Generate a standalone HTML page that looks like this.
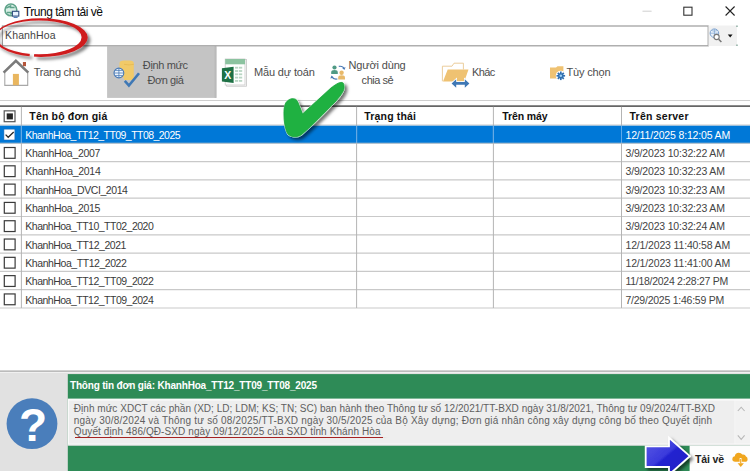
<!DOCTYPE html>
<html lang="vi">
<head>
<meta charset="utf-8">
<title>Trung tâm tải về</title>
<style>
html,body{margin:0;padding:0;}
body{width:750px;height:471px;overflow:hidden;background:#fff;position:relative;
  font-family:"Liberation Sans","DejaVu Sans",sans-serif;color:#222;}
.abs{position:absolute;}
svg{position:absolute;overflow:visible;}
.t{position:absolute;white-space:nowrap;line-height:1;}
</style>
</head>
<body>
<svg width="750" height="471" viewBox="0 0 750 471" style="left:0;top:0;">
<!-- backgrounds -->
<rect x="107.1" y="46.3" width="109.3" height="51.6" fill="#c4c4c4"/>
<rect x="214.6" y="46.3" width="1.8" height="51.6" fill="#bababa"/>
<rect x="0" y="125.45" width="750" height="18.11" fill="#0078d7"/>
<rect x="0" y="372.5" width="750" height="98.5" fill="#e1e1e1"/>
<rect x="67.8" y="374.1" width="682.2" height="97" fill="#2e8b57"/>
<rect x="67.8" y="398.6" width="682.2" height="46.8" fill="#fafafa"/>
<rect x="69" y="400.6" width="665.6" height="43" fill="#eeeeee"/>
<rect x="735.2" y="400.6" width="14.8" height="43" fill="#f2f2f2"/>
<rect x="67.8" y="444.6" width="682.2" height="1" fill="#dedede"/>
<rect x="689.6" y="445.6" width="60.4" height="25.4" fill="#fdfdfd"/>
</svg>
<svg width="750" height="471" viewBox="0 0 750 471" style="left:0;top:0;">
<!-- search box -->
<rect x="2.4" y="26" width="705.8" height="19.8" fill="#fff" stroke="#9c9c9c" stroke-width="1.2"/>
<!-- table lines -->
<line x1="0" y1="100.5" x2="750" y2="100.5" stroke="#cfcfcf" stroke-width="1"/>
<line x1="0" y1="106.2" x2="750" y2="106.2" stroke="#666" stroke-width="1.7"/>
<line x1="0" y1="124.95" x2="750" y2="124.95" stroke="#cfcfcf" stroke-width="1"/>
<line x1="0" y1="143.25" x2="750" y2="143.25" stroke="#c9c9c9" stroke-width="1.2"/>
<line x1="0" y1="161.56" x2="750" y2="161.56" stroke="#c9c9c9" stroke-width="1.2"/>
<line x1="0" y1="179.87" x2="750" y2="179.87" stroke="#c9c9c9" stroke-width="1.2"/>
<line x1="0" y1="198.17" x2="750" y2="198.17" stroke="#c9c9c9" stroke-width="1.2"/>
<line x1="0" y1="216.48" x2="750" y2="216.48" stroke="#c9c9c9" stroke-width="1.2"/>
<line x1="0" y1="234.78" x2="750" y2="234.78" stroke="#c9c9c9" stroke-width="1.2"/>
<line x1="0" y1="253.08" x2="750" y2="253.08" stroke="#c9c9c9" stroke-width="1.2"/>
<line x1="0" y1="271.39" x2="750" y2="271.39" stroke="#c9c9c9" stroke-width="1.2"/>
<line x1="0" y1="289.69" x2="750" y2="289.69" stroke="#c9c9c9" stroke-width="1.2"/>
<line x1="0" y1="308.00" x2="750" y2="308.00" stroke="#c9c9c9" stroke-width="1.2"/>
<line x1="21.4" y1="106.8" x2="21.4" y2="308.00" stroke="#b4b4b4" stroke-width="1"/>
<line x1="21.4" y1="125.55" x2="21.4" y2="142.85" stroke="#5ea9ea" stroke-width="1"/>
<line x1="356.6" y1="106.8" x2="356.6" y2="308.00" stroke="#b4b4b4" stroke-width="1"/>
<line x1="356.6" y1="125.55" x2="356.6" y2="142.85" stroke="#5ea9ea" stroke-width="1"/>
<line x1="493.4" y1="106.8" x2="493.4" y2="308.00" stroke="#b4b4b4" stroke-width="1"/>
<line x1="493.4" y1="125.55" x2="493.4" y2="142.85" stroke="#5ea9ea" stroke-width="1"/>
<line x1="621.5" y1="106.8" x2="621.5" y2="308.00" stroke="#b4b4b4" stroke-width="1"/>
<line x1="621.5" y1="125.55" x2="621.5" y2="142.85" stroke="#5ea9ea" stroke-width="1"/>
<line x1="0" y1="371.2" x2="750" y2="371.2" stroke="#a5a5a5" stroke-width="1.2"/>
<!-- row checkboxes -->
<rect x="3.9" y="129.10" width="11" height="10.9" fill="#fff" stroke="#1566b8" stroke-width="0.6"/>
<rect x="4.3" y="147.50" width="10.8" height="10.8" fill="#fff" stroke="#3a3a3a" stroke-width="1.2"/>
<rect x="4.3" y="165.81" width="10.8" height="10.8" fill="#fff" stroke="#3a3a3a" stroke-width="1.2"/>
<rect x="4.3" y="184.12" width="10.8" height="10.8" fill="#fff" stroke="#3a3a3a" stroke-width="1.2"/>
<rect x="4.3" y="202.42" width="10.8" height="10.8" fill="#fff" stroke="#3a3a3a" stroke-width="1.2"/>
<rect x="4.3" y="220.73" width="10.8" height="10.8" fill="#fff" stroke="#3a3a3a" stroke-width="1.2"/>
<rect x="4.3" y="239.03" width="10.8" height="10.8" fill="#fff" stroke="#3a3a3a" stroke-width="1.2"/>
<rect x="4.3" y="257.33" width="10.8" height="10.8" fill="#fff" stroke="#3a3a3a" stroke-width="1.2"/>
<rect x="4.3" y="275.64" width="10.8" height="10.8" fill="#fff" stroke="#3a3a3a" stroke-width="1.2"/>
<rect x="4.3" y="293.94" width="10.8" height="10.8" fill="#fff" stroke="#3a3a3a" stroke-width="1.2"/>
</svg>
<svg width="750" height="471" viewBox="0 0 750 471" style="left:0;top:0;">
<!-- window icon -->
<g id="winicon">
<circle cx="10.9" cy="9.9" r="5.9" fill="#d9efe6" stroke="#5fa38a" stroke-width="1.6"/>
<path d="M6.2 8.2 L10.5 6 L10.5 7.4 L14.6 7.4 M15.4 11.6 L11 13.8 L11 12.4 L7 12.4" fill="none" stroke="#5fa38a" stroke-width="1.5"/>
<rect x="12.4" y="11.3" width="6.4" height="4.8" fill="#e8f3ff" stroke="#2f4d7e" stroke-width="1.1"/>
<rect x="13.6" y="16.8" width="4" height="1.2" fill="#4f7fba"/>
</g>
<!-- window controls -->
<line x1="642.5" y1="11.2" x2="651.6" y2="11.2" stroke="#cfcfcf" stroke-width="1"/>
<rect x="683.8" y="7.2" width="8.2" height="8" fill="none" stroke="#333" stroke-width="1.1"/>
<path d="M725.6 6.5 L734.6 15.5 M734.6 6.5 L725.6 15.5" stroke="#222" stroke-width="1.1" fill="none"/>
<!-- search button -->
<rect x="708.5" y="25.5" width="28.5" height="20.5" fill="#f1f1f1"/>
<circle cx="714.4" cy="33.2" r="4.3" fill="#eaf2fb" stroke="#7da2cf" stroke-width="1"/>
<path d="M710.2 33.2 H718.6 M714.4 29 V37.4 M711.5 30.5 Q714.4 32 717.3 30.5" stroke="#7da2cf" stroke-width="0.7" fill="none"/>
<circle cx="716.6" cy="37" r="2.6" fill="#fff" stroke="#777" stroke-width="1.1"/>
<line x1="718.6" y1="39.2" x2="721.4" y2="42" stroke="#777" stroke-width="1.6"/>
<path d="M727.8 34.4 L732.6 34.4 L730.2 37.4 Z" fill="#111"/>
<rect x="736.5" y="25.6" width="1" height="1.2" fill="#2e6b55"/><rect x="736.5" y="44.6" width="1" height="1.2" fill="#2e6b55"/>
<!-- house -->
<g id="house">
<rect x="22.9" y="62" width="3.1" height="4.2" fill="#b5553a"/>
<path d="M4.8 72.5 V85.4 H27.7 V72.5" fill="#fff" stroke="#a8a8a8" stroke-width="1.1"/>
<rect x="12.9" y="73.9" width="6" height="11.3" fill="#e9b65f"/>
<path d="M3.6 72.6 L15.9 60.9 L28.3 72.6" fill="none" stroke="#7b7b7b" stroke-width="2.6" stroke-linejoin="miter"/>
</g>
<!-- dinh muc icon -->
<g id="dm">
<path d="M119.5 63 Q119.5 60.5 124 60.5 H129.5 Q133.8 60.5 133.8 63 V78 Q133.8 80 129 80 H124 V77.5 H119.5 Z" fill="#f1ca68"/>
<path d="M124 64.3 Q129 65.6 133.8 64.3" fill="none" stroke="#e4b850" stroke-width="0.8"/>
<circle cx="118.9" cy="73" r="4.9" fill="#eef5fd" stroke="#4a7ab5" stroke-width="1.1"/>
<path d="M114 73 H123.8 M118.9 68.1 V77.9 M115.2 70.4 H122.6 M115.2 75.6 H122.6" stroke="#4a7ab5" stroke-width="0.8" fill="none"/>
<path d="M124.8 80.9 L128.9 85.6 L139 73.2" fill="none" stroke="#3f78b5" stroke-width="2.6"/>
</g>
<!-- excel icon -->
<g id="xl">
<rect x="226.6" y="59.4" width="19.8" height="26.8" fill="#fff" stroke="#c4c4c4" stroke-width="0.8"/>
<rect x="225.2" y="59" width="19.8" height="26" fill="#fff" stroke="#c9c9c9" stroke-width="0.8"/>
<rect x="225.2" y="59" width="19.8" height="5.3" fill="#8cc3a0"/>
<g fill="#b9d6c4">
<rect x="235" y="66.8" width="3.2" height="1.8"/><rect x="239" y="66.8" width="3.2" height="1.8"/>
<rect x="235" y="70.1" width="3.2" height="1.8"/><rect x="239" y="70.1" width="3.2" height="1.8"/>
<rect x="235" y="73.4" width="3.2" height="1.8"/><rect x="239" y="73.4" width="3.2" height="1.8"/>
<rect x="235" y="76.7" width="3.2" height="1.8"/><rect x="239" y="76.7" width="3.2" height="1.8"/>
<rect x="235" y="80" width="3.2" height="1.8"/><rect x="239" y="80" width="3.2" height="1.8"/>
</g>
<path d="M221.9 68.2 L233.6 66.7 V83 L221.9 81.5 Z" fill="#1e7145"/>
<text x="227.7" y="78.9" font-family="Liberation Sans, sans-serif" font-weight="bold" font-size="10.5" fill="#fff" text-anchor="middle">X</text>
</g>
<!-- users icon -->
<g id="users">
<circle cx="334.5" cy="67.5" r="2.1" fill="#4f9a85"/>
<path d="M331.2 74 V72.4 Q331.2 70 334.5 70 Q337.8 70 337.8 72.4 V74 Z" fill="#4f9a85"/>
<circle cx="341.6" cy="72.8" r="2.2" fill="#e8b96a"/>
<path d="M338.2 79.5 V77.6 Q338.2 75.2 341.6 75.2 Q345 75.2 345 77.6 V79.5 Z" fill="#e8b96a"/>
<path d="M338.8 66.4 Q343 65.8 344 68.6" fill="none" stroke="#4a7ab5" stroke-width="1.1"/>
<path d="M342.2 68 L344.4 70 L345.6 67.2 Z" fill="#4a7ab5"/>
<path d="M337.4 79 Q333 79.6 332 77" fill="none" stroke="#4a7ab5" stroke-width="1.1"/>
<path d="M333.8 77.6 L331.5 75.6 L330.4 78.4 Z" fill="#4a7ab5"/>
</g>
<!-- folder (khac) -->
<g id="folder">
<path d="M442.4 81.3 V66.2 H452 L454 63.2 H463.4 V69.4" fill="#fff" stroke="#e9c791" stroke-width="0.9"/>
<path d="M447.7 69.4 H468.5 L464.3 81.6 H443 Z" fill="#efc272"/>
<rect x="459.5" y="78" width="1.4" height="4" fill="#efc272"/>
<path d="M451.6 83.4 L456.2 79.2 V82.1 H464.8 V79.2 L469.4 83.4 L464.8 87.7 V84.8 H456.2 V87.7 Z" fill="#3f78b5" stroke="#fff" stroke-width="1.6" paint-order="stroke"/>
</g>
<!-- options -->
<g id="opt">
<path d="M550 67.6 H556 L557.5 66.2 H563.4 V78.4 H550 Z" fill="#efc272"/>
<circle cx="560.8" cy="75.8" r="5" fill="#fff"/>
<g stroke="#2f6fb0" stroke-width="1.7">
<line x1="560.8" y1="71.5" x2="560.8" y2="80.1"/>
<line x1="556.5" y1="75.8" x2="565.1" y2="75.8"/>
<line x1="557.8" y1="72.8" x2="563.8" y2="78.8"/>
<line x1="563.8" y1="72.8" x2="557.8" y2="78.8"/>
</g>
<circle cx="560.8" cy="75.8" r="2.6" fill="#2f6fb0"/>
<circle cx="560.8" cy="75.8" r="1.3" fill="#9fd0f5"/>
</g>
<!-- header checkbox -->
<rect x="4.2" y="110.85" width="10.8" height="10.85" fill="#fff" stroke="#555" stroke-width="1.2"/>
<rect x="6.7" y="113.4" width="6.2" height="6" fill="#262626"/>
<!-- row1 check -->
<path d="M5.6 134.6 L8.2 137.3 L13.7 132" fill="none" stroke="#2a2a2a" stroke-width="1.3"/>
<!-- question circle -->
<circle cx="32" cy="423.7" r="25.4" fill="#4a7ebb"/>
<!-- scrollbar arrows -->
<path d="M737.8 411 L741.2 407.2 L744.6 411" fill="none" stroke="#b8b8b8" stroke-width="1.1"/>
<path d="M737.8 435.4 L741.2 439.4 L744.6 435.4" fill="none" stroke="#b8b8b8" stroke-width="1.1"/>
<!-- cloud -->
<g id="cloud">
<path d="M735.2 461.8 Q732.3 461.8 732.3 459 Q732.3 456.6 734.8 456.3 Q735.2 452.8 738.8 452.8 Q741.2 452.8 742.3 454.6 Q745 454 746 456.4 Q747.7 457 747.6 459.2 Q747.5 461.8 745 461.8 Z" fill="#f0a61e"/>
<rect x="739.9" y="458.6" width="1.7" height="5" fill="#f0a61e" stroke="#fff" stroke-width="0.5"/>
<path d="M737.6 463.2 H743.9 L740.75 467 Z" fill="#f0a61e"/>
</g>
</svg>

<div class="t" style="left:23.8px;top:6px;font-size:12px;color:#0a0a0a;letter-spacing:-0.467px;">Trung tâm tải về</div>
<div class="t" style="left:5.1px;top:30px;font-size:10.5px;color:#444;letter-spacing:0.109px;">KhanhHoa</div>
<div class="t" style="left:33.7px;top:67px;font-size:11px;color:#4d4d4d;letter-spacing:-0.247px;">Trang chủ</div>
<div class="t" style="left:142.8px;top:60px;font-size:11px;color:#4d4d4d;letter-spacing:-0.352px;">Định mức</div>
<div class="t" style="left:147.5px;top:75px;font-size:11px;color:#4d4d4d;letter-spacing:-0.459px;">Đơn giá</div>
<div class="t" style="left:254.0px;top:67px;font-size:11px;color:#4d4d4d;letter-spacing:-0.155px;">Mẫu dự toán</div>
<div class="t" style="left:348.4px;top:60px;font-size:11px;color:#4d4d4d;letter-spacing:-0.141px;">Người dùng</div>
<div class="t" style="left:361.6px;top:75px;font-size:11px;color:#4d4d4d;letter-spacing:-0.451px;">chia sẻ</div>
<div class="t" style="left:472.0px;top:67px;font-size:11px;color:#4d4d4d;letter-spacing:-0.645px;">Khác</div>
<div class="t" style="left:566.4px;top:67px;font-size:11px;color:#4d4d4d;letter-spacing:-0.156px;">Tùy chọn</div>
<div class="t" style="left:29.3px;top:111px;font-size:10.5px;color:#111;font-weight:bold;letter-spacing:0.177px;">Tên bộ đơn giá</div>
<div class="t" style="left:364.3px;top:111px;font-size:10.5px;color:#111;font-weight:bold;letter-spacing:0.171px;">Trạng thái</div>
<div class="t" style="left:502.2px;top:111px;font-size:10.5px;color:#111;font-weight:bold;letter-spacing:-0.089px;">Trên máy</div>
<div class="t" style="left:629.5px;top:111px;font-size:10.5px;color:#111;font-weight:bold;letter-spacing:0.234px;">Trên server</div>
<div class="t" style="left:25.3px;top:130px;font-size:10.5px;color:#fff;letter-spacing:-0.542px;">KhanhHoa_TT12_TT09_TT08_2025</div>
<div class="t" style="left:625.5px;top:130px;font-size:10.5px;color:#fff;letter-spacing:-0.158px;">12/11/2025 8:12:05 AM</div>
<div class="t" style="left:25.3px;top:148px;font-size:10.5px;color:#3a3a3a;letter-spacing:-0.318px;">KhanhHoa_2007</div>
<div class="t" style="left:625.5px;top:148px;font-size:10.5px;color:#444;letter-spacing:-0.177px;">3/9/2023 10:32:22 AM</div>
<div class="t" style="left:25.3px;top:166px;font-size:10.5px;color:#3a3a3a;letter-spacing:-0.279px;">KhanhHoa_2014</div>
<div class="t" style="left:625.5px;top:166px;font-size:10.5px;color:#444;letter-spacing:-0.177px;">3/9/2023 10:32:23 AM</div>
<div class="t" style="left:25.3px;top:185px;font-size:10.5px;color:#3a3a3a;letter-spacing:-0.419px;">KhanhHoa_DVCI_2014</div>
<div class="t" style="left:625.5px;top:185px;font-size:10.5px;color:#444;letter-spacing:-0.177px;">3/9/2023 10:32:23 AM</div>
<div class="t" style="left:25.3px;top:203px;font-size:10.5px;color:#3a3a3a;letter-spacing:-0.318px;">KhanhHoa_2015</div>
<div class="t" style="left:625.5px;top:203px;font-size:10.5px;color:#444;letter-spacing:-0.177px;">3/9/2023 10:32:23 AM</div>
<div class="t" style="left:25.3px;top:221px;font-size:10.5px;color:#3a3a3a;letter-spacing:-0.501px;">KhanhHoa_TT10_TT02_2020</div>
<div class="t" style="left:625.5px;top:221px;font-size:10.5px;color:#444;letter-spacing:-0.177px;">3/9/2023 10:32:24 AM</div>
<div class="t" style="left:25.3px;top:240px;font-size:10.5px;color:#3a3a3a;letter-spacing:-0.476px;">KhanhHoa_TT12_2021</div>
<div class="t" style="left:625.5px;top:240px;font-size:10.5px;color:#444;letter-spacing:-0.158px;">12/1/2023 11:40:58 AM</div>
<div class="t" style="left:25.3px;top:258px;font-size:10.5px;color:#3a3a3a;letter-spacing:-0.448px;">KhanhHoa_TT12_2022</div>
<div class="t" style="left:625.5px;top:258px;font-size:10.5px;color:#444;letter-spacing:-0.158px;">12/1/2023 11:41:00 AM</div>
<div class="t" style="left:25.3px;top:276px;font-size:10.5px;color:#3a3a3a;letter-spacing:-0.501px;">KhanhHoa_TT12_TT09_2022</div>
<div class="t" style="left:625.5px;top:276px;font-size:10.5px;color:#444;letter-spacing:-0.281px;">11/18/2024 2:28:27 PM</div>
<div class="t" style="left:25.3px;top:295px;font-size:10.5px;color:#3a3a3a;letter-spacing:-0.501px;">KhanhHoa_TT12_TT09_2024</div>
<div class="t" style="left:625.5px;top:295px;font-size:10.5px;color:#444;letter-spacing:-0.242px;">7/29/2025 1:46:59 PM</div>
<div class="t" style="left:70.0px;top:381px;font-size:10px;color:#fff;font-weight:bold;letter-spacing:-0.185px;">Thông tin đơn giá: KhanhHoa_TT12_TT09_TT08_2025</div>
<div class="t" style="left:73.8px;top:404px;font-size:10px;color:#606060;letter-spacing:0.029px;">Định mức XDCT các phần (XD; LD; LDM; KS; TN; SC) ban hành theo Thông tư số 12/2021/TT-BXD ngày 31/8/2021, Thông tư 09/2024/TT-BXD</div>
<div class="t" style="left:73.8px;top:416px;font-size:10px;color:#606060;letter-spacing:0.188px;">ngày 30/8/2024 và Thông tư số 08/2025/TT-BXD ngày 30/5/2025 của Bộ Xây dựng; Đơn giá nhân công xây dựng công bố theo Quyết định</div>
<div class="t" style="left:73.8px;top:427px;font-size:10px;color:#606060;letter-spacing:0.101px;">Quyết định 486/QĐ-SXD ngày 09/12/2025 của SXD tỉnh Khánh Hòa</div>
<div class="t" style="left:695.0px;top:454px;font-size:10.5px;color:#222;font-weight:bold;letter-spacing:-0.130px;">Tải về</div>
<div class="t" id="qm" style="left:19px;top:402.4px;width:26px;text-align:center;font-size:46px;font-weight:bold;color:#fff;">?</div>
<svg width="750" height="471" viewBox="0 0 750 471" style="left:0;top:0;">
<defs>
<filter id="sh1" x="-20%" y="-20%" width="150%" height="160%"><feDropShadow dx="2.8" dy="2.8" stdDeviation="1.4" flood-color="#000" flood-opacity="0.5"/></filter>
<filter id="sh2" x="-20%" y="-20%" width="150%" height="150%"><feDropShadow dx="2.5" dy="2.5" stdDeviation="1.6" flood-color="#000" flood-opacity="0.55"/></filter>
<linearGradient id="ag" x1="0" y1="0" x2="1" y2="1"><stop offset="0" stop-color="#5a5ae6"/><stop offset="0.45" stop-color="#3a3adc"/><stop offset="0.5" stop-color="#2323d0"/><stop offset="1" stop-color="#1c1cc4"/></linearGradient>
</defs>
<!-- red ellipse -->
<mask id="gapm"><rect x="-20" y="0" width="140" height="80" fill="#fff"/><path d="M30.2 50 L34.6 50 L33.4 62 L29 62 Z" fill="#000"/></mask>
<g filter="url(#sh1)"><path mask="url(#gapm)" fill="#cf1a1e" fill-rule="evenodd" d="M-5.7 37.6 A46.7 19.3 0 1 0 87.7 37.6 A46.7 19.3 0 1 0 -5.7 37.6 Z M-3.7 37.3 A42.65 16.9 0 1 1 81.6 37.3 A42.65 16.9 0 1 1 -3.7 37.3 Z"/></g>
<!-- red underline -->
<path filter="url(#sh1)" d="M75 437.5 C150 437.1 300 437.9 383 437.7" fill="none" stroke="#a52222" stroke-width="1.9"/>
<!-- green check -->
<path filter="url(#sh2)" fill="#1fb141" stroke="#d2f6da" stroke-width="1.6" d="M342 82.5 C339 82 335 85 331 88 L302.5 114 C301 110 299 105 297.5 101.5 C296 98 291 98 288 100.5 C284.5 103 284 108 284 114 C284 121 285 128 287 132.5 C289 137 296 138 301 135 C310 128 325 112 336 101 C341 95 345 90 344 86 C344 84 343.5 83 342 82.5 Z"/>
<path fill="#1fb141" stroke="#18a03a" stroke-width="0.8" d="M342 82.5 C339 82 335 85 331 88 L302.5 114 C301 110 299 105 297.5 101.5 C296 98 291 98 288 100.5 C284.5 103 284 108 284 114 C284 121 285 128 287 132.5 C289 137 296 138 301 135 C310 128 325 112 336 101 C341 95 345 90 344 86 C344 84 343.5 83 342 82.5 Z"/>
<!-- blue arrow -->
<path filter="url(#sh2)" fill="url(#ag)" stroke="#fff" stroke-width="1.8" stroke-linejoin="miter" d="M645.7 446.4 H669 V437.8 L689.8 456.2 L669 474.6 V467 H645.7 Z"/>
</svg>

</body>
</html>
